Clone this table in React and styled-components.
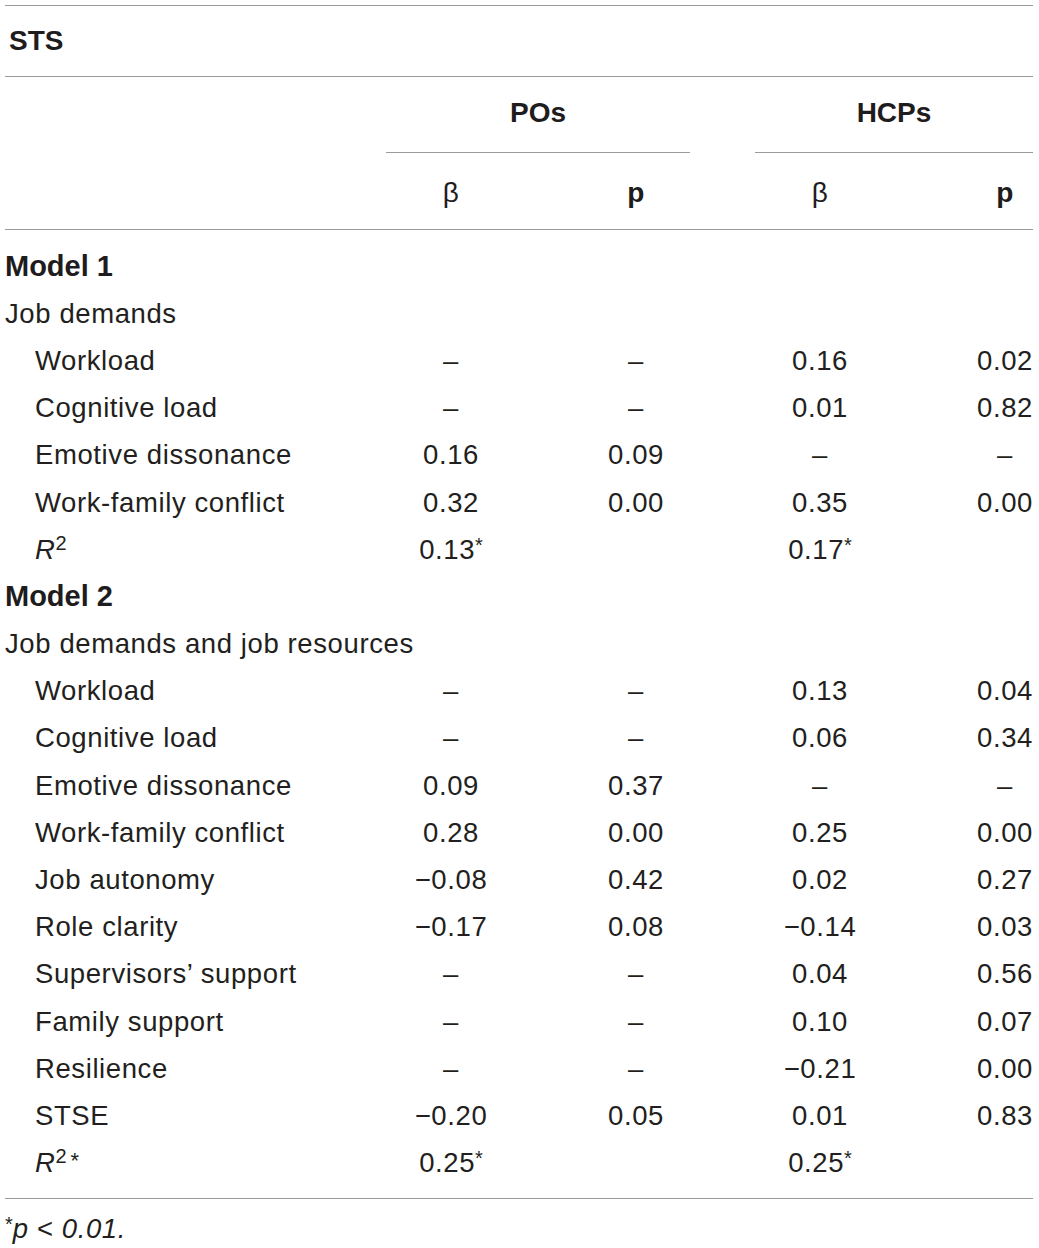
import React from "react";
import styled, { createGlobalStyle } from "styled-components";

const GlobalStyle = createGlobalStyle`
  html, body {
    margin: 0;
    padding: 0;
    background: #ffffff;
  }
  body {
    font-family: "Liberation Sans", Arial, Helvetica, sans-serif;
    color: #231f20;
  }
`;

// 열 위치: 라벨 | β | 간격 | p | 간격 | β | 간격 | p
const COLS = "381px 130px 66px 108px 65px 130px 92px 56px";

const rows = [
  { type: "model", label: "Model 1" },
  { type: "group", label: "Job demands" },
  { label: "Workload", v: ["–", "–", "0.16", "0.02"] },
  { label: "Cognitive load", v: ["–", "–", "0.01", "0.82"] },
  { label: "Emotive dissonance", v: ["0.16", "0.09", "–", "–"] },
  { label: "Work-family conflict", v: ["0.32", "0.00", "0.35", "0.00"] },
  { type: "r2", v: ["0.13", "", "0.17", ""] },
  { type: "model", label: "Model 2" },
  { type: "group", label: "Job demands and job resources" },
  { label: "Workload", v: ["–", "–", "0.13", "0.04"] },
  { label: "Cognitive load", v: ["–", "–", "0.06", "0.34"] },
  { label: "Emotive dissonance", v: ["0.09", "0.37", "–", "–"] },
  { label: "Work-family conflict", v: ["0.28", "0.00", "0.25", "0.00"] },
  { label: "Job autonomy", v: ["−0.08", "0.42", "0.02", "0.27"] },
  { label: "Role clarity", v: ["−0.17", "0.08", "−0.14", "0.03"] },
  { label: "Supervisors’ support", v: ["–", "–", "0.04", "0.56"] },
  { label: "Family support", v: ["–", "–", "0.10", "0.07"] },
  { label: "Resilience", v: ["–", "–", "−0.21", "0.00"] },
  { label: "STSE", v: ["−0.20", "0.05", "0.01", "0.83"] },
  { type: "r2", star: true, v: ["0.25", "", "0.25", ""] },
];

function App() {
  return (
    <>
      <GlobalStyle />
      <Page>
        <Rule />
        <TitleRow>STS</TitleRow>
        <Rule />
        <HeadGrid>
          <GroupHead $col="2 / 5">POs</GroupHead>
          <GroupHead $col="6 / 9">HCPs</GroupHead>
          <GroupLine $col="2 / 5" />
          <GroupLine $col="6 / 9" />
          <SubHead $col={2} $light>β</SubHead>
          <SubHead $col={4}>p</SubHead>
          <SubHead $col={6} $light>β</SubHead>
          <SubHead $col={8}>p</SubHead>
        </HeadGrid>
        <Rule />
        <Body>
          {rows.map((r, i) => {
            if (r.type === "model") {
              return (
                <Row key={i}>
                  <ModelLabel>{r.label}</ModelLabel>
                </Row>
              );
            }
            if (r.type === "group") {
              return (
                <Row key={i}>
                  <Label>{r.label}</Label>
                </Row>
              );
            }
            const values = [r.v[0], null, r.v[1], null, r.v[2], null, r.v[3]];
            return (
              <Row key={i}>
                <Label $indent>
                  {r.type === "r2" ? (
                    <>
                      <i>R</i>
                      <Sup>2</Sup>
                      {r.star && <Star>*</Star>}
                    </>
                  ) : (
                    r.label
                  )}
                </Label>
                {values.map((val, j) =>
                  val === null ? (
                    <span key={j} />
                  ) : (
                    <Cell key={j}>
                      {val}
                      {r.type === "r2" && val !== "" && <Mark>*</Mark>}
                    </Cell>
                  )
                )}
              </Row>
            );
          })}
        </Body>
        <Rule />
        <Foot>
          <Mark>*</Mark>
          <i>p</i> &lt; <i>0.01.</i>
        </Foot>
      </Page>
    </>
  );
}

export default App;

const Page = styled.div`
  width: 1028px;
  margin: 0 0 0 5px;
  padding-top: 5px;
  font-size: 27.5px;
  letter-spacing: 0.6px;
`;

const Rule = styled.div`
  height: 0;
  border-top: 1.5px solid #9b9b9b;
`;

const TitleRow = styled.div`
  height: 70px;
  display: flex;
  align-items: center;
  padding-left: 4px;
  font-weight: bold;
  font-size: 28px;
  letter-spacing: 0;
  color: #1f1c1d;
`;

const HeadGrid = styled.div`
  display: grid;
  grid-template-columns: ${COLS};
  grid-template-rows: 76px 76px;
`;

const GroupHead = styled.div`
  grid-column: ${(p) => p.$col};
  grid-row: 1;
  display: flex;
  align-items: center;
  justify-content: center;
  padding-bottom: 4px;
  font-weight: bold;
  font-size: 28px;
  letter-spacing: 0;
  color: #1f1c1d;
`;

const GroupLine = styled.div`
  grid-column: ${(p) => p.$col};
  grid-row: 1;
  align-self: end;
  border-top: 1.5px solid #9b9b9b;
`;

const SubHead = styled.div`
  grid-column: ${(p) => p.$col};
  grid-row: 2;
  display: flex;
  align-items: center;
  justify-content: center;
  padding-top: 4px;
  font-weight: ${(p) => (p.$light ? "normal" : "bold")};
  font-size: 28px;
  color: #1f1c1d;
`;

const Body = styled.div`
  padding: 13px 0 11px;
`;

const Row = styled.div`
  display: grid;
  grid-template-columns: ${COLS};
  height: 47.2px;
  align-items: center;
  white-space: nowrap;
`;

const Label = styled.div`
  padding-left: ${(p) => (p.$indent ? "30px" : "0")};
`;

const ModelLabel = styled.div`
  font-weight: bold;
  font-size: 29px;
  letter-spacing: 0;
  color: #1f1c1d;
`;

const Cell = styled.div`
  text-align: center;
`;

const Sup = styled.span`
  font-size: 20px;
  vertical-align: 9px;
  line-height: 0;
  letter-spacing: 0;
`;

const Star = styled.span`
  margin-left: 4px;
  font-size: 22px;
  vertical-align: 4px;
`;

const Mark = styled.span`
  font-size: 20px;
  vertical-align: 7px;
  line-height: 0;
  letter-spacing: 0;
`;

const Foot = styled.div`
  padding-top: 14px;
`;
